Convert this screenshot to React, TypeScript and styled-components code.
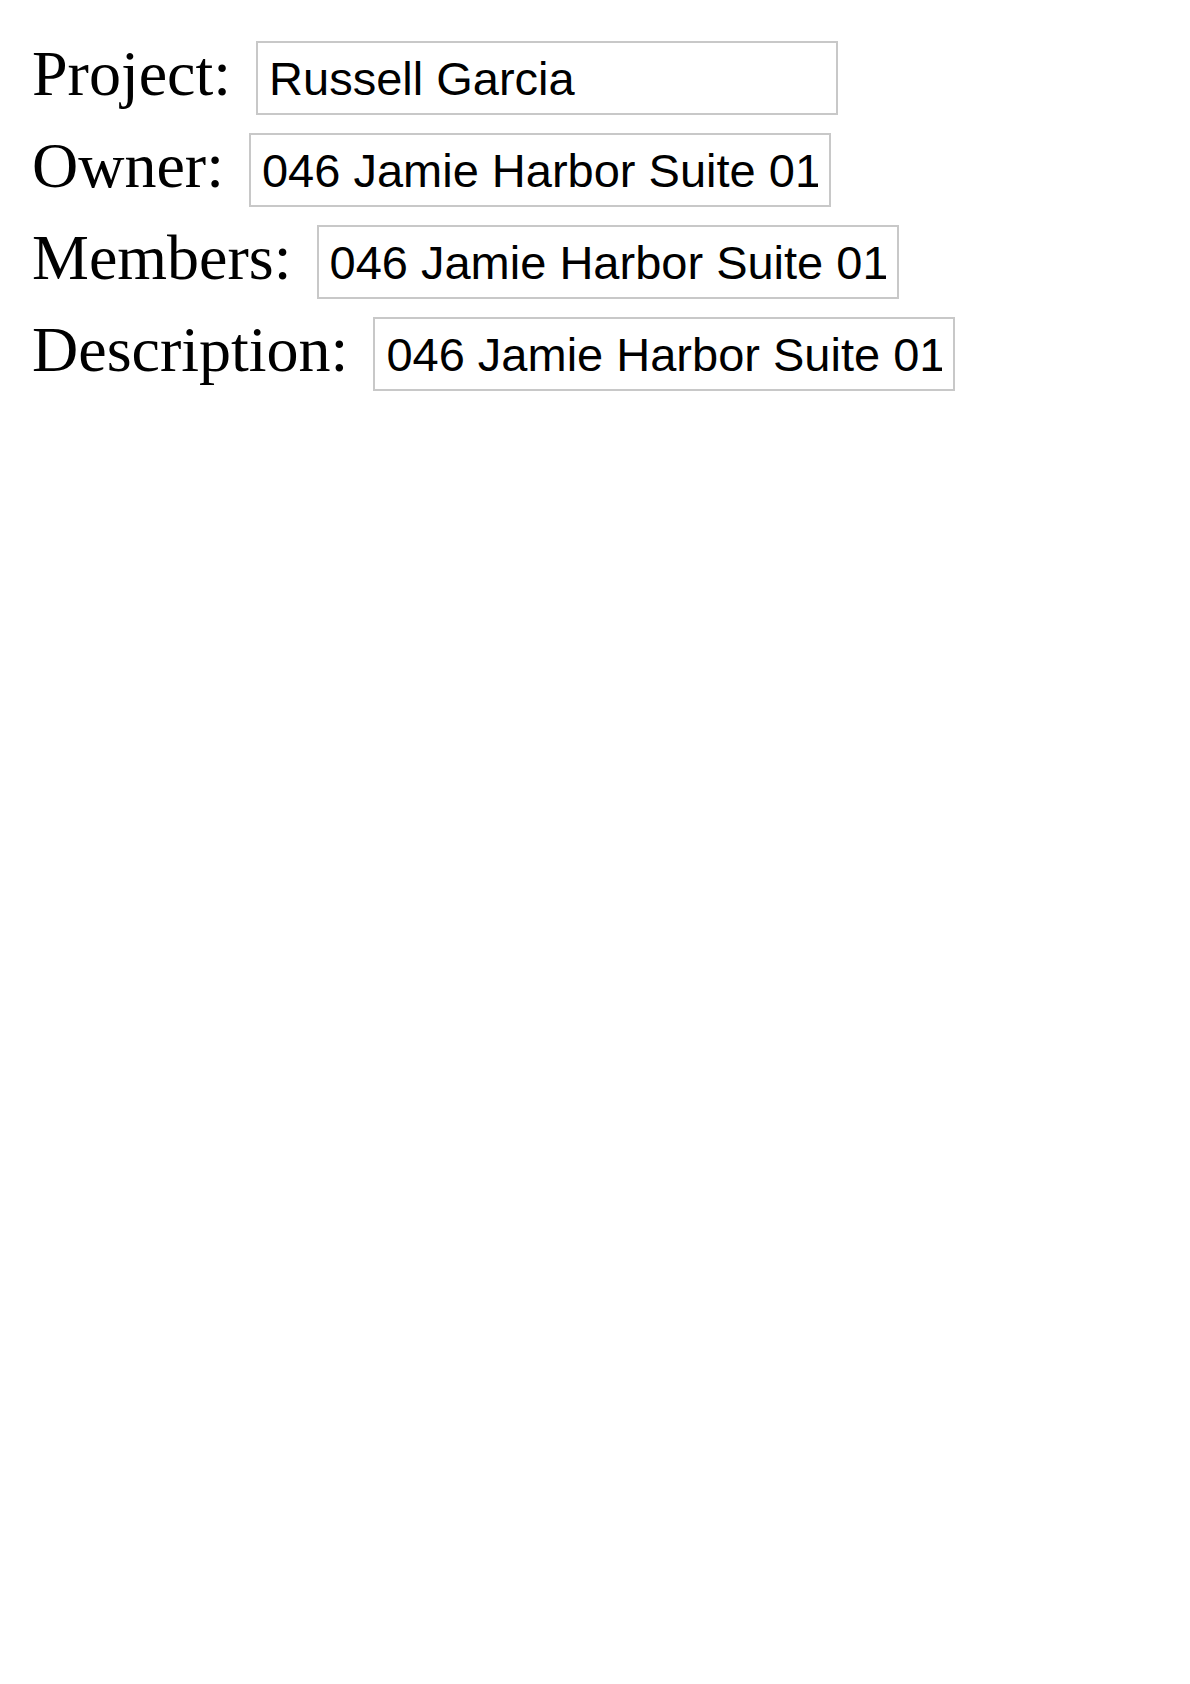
import React from 'react';
import styled, { createGlobalStyle } from 'styled-components';

const GlobalStyle = createGlobalStyle`
  html, body {
    margin: 0;
    padding: 0;
    background: #ffffff;
  }
`;

const Form = styled.form`
  display: flex;
  flex-direction: column;
  gap: 18px;
  padding: 41px 0 0 32px;
`;

const Row = styled.div`
  display: flex;
  align-items: baseline;
  gap: 25px;
`;

const Label = styled.label`
  font-family: 'Liberation Serif', 'Times New Roman', serif;
  font-size: 64px;
  color: #000000;
  line-height: 1;
`;

const Field = styled.input`
  box-sizing: border-box;
  width: 582px;
  height: 74px;
  padding: 0 11px;
  border: 2px solid #c8c8c8;
  border-radius: 0;
  background: #ffffff;
  color: #000000;
  font-family: 'Liberation Sans', Arial, sans-serif;
  font-size: 47px;
  outline: none;
`;

type FieldRow = {
  id: string;
  label: string;
  value: string;
};

const rows: FieldRow[] = [
  { id: 'project', label: 'Project:', value: 'Russell Garcia' },
  { id: 'owner', label: 'Owner:', value: '046 Jamie Harbor Suite 01' },
  { id: 'members', label: 'Members:', value: '046 Jamie Harbor Suite 01' },
  { id: 'description', label: 'Description:', value: '046 Jamie Harbor Suite 01' },
];

export default function App() {
  return (
    <>
      <GlobalStyle />
      <Form onSubmit={(e) => e.preventDefault()}>
        {rows.map((row) => (
          <Row key={row.id}>
            <Label htmlFor={row.id}>{row.label}</Label>
            <Field id={row.id} type="text" defaultValue={row.value} />
          </Row>
        ))}
      </Form>
    </>
  );
}
